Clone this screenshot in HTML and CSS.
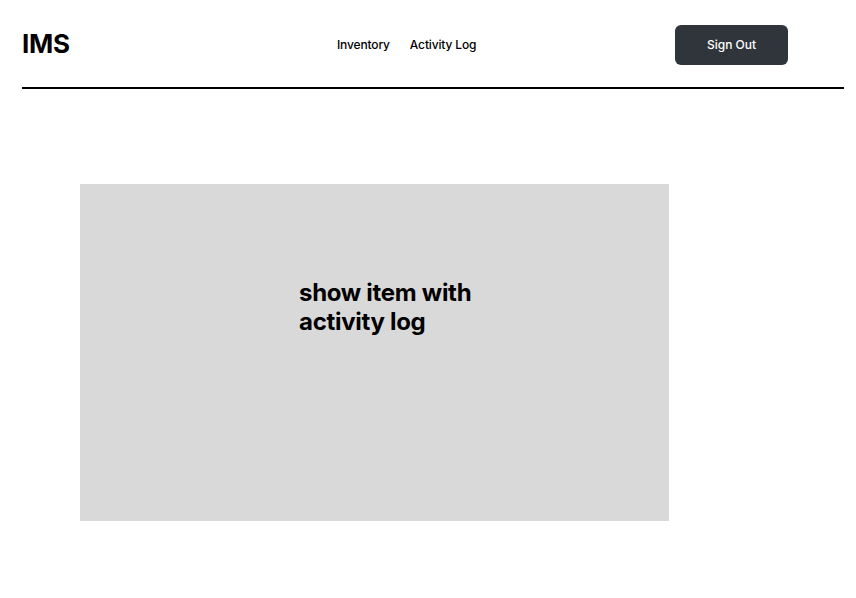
FILE: index.html
```html
<!DOCTYPE html>
<html lang="en">
<head>
<meta charset="utf-8">
<title>IMS</title>
<link rel="stylesheet" href="styles.css">
</head>
<body>
<header class="site-header">
  <div class="header-inner">
    <div class="logo">IMS</div>
    <nav class="nav">
      <a href="#" class="nav-link">Inventory</a>
      <a href="#" class="nav-link">Activity Log</a>
    </nav>
    <button class="sign-out">Sign Out</button>
  </div>
</header>
<main class="main">
  <section class="placeholder">
    <p class="placeholder-text">show item with activity log</p>
  </section>
</main>
</body>
</html>
```
FILE: styles.css
```css
* { box-sizing: border-box; }
html, body { margin: 0; padding: 0; background: #ffffff; }
body {
  font-family: Inter, "Noto Sans", sans-serif;
  color: #000000;
}
.site-header {
  margin: 0 12px 0 22px;
  border-bottom: 2px solid #000000;
}
.header-inner {
  height: 87px;
  display: grid;
  grid-template-columns: 315px auto 1fr;
  align-items: center;
  padding-right: 56px;
}
.logo {
  font-size: 26px;
  font-weight: 700;
  letter-spacing: -0.2px;
}
.nav {
  display: flex;
  gap: 20px;
  padding-top: 2px;
}
.nav-link {
  font-size: 12px;
  font-weight: 500;
  letter-spacing: -0.15px;
  color: #000000;
  text-decoration: none;
}
.sign-out {
  justify-self: end;
  width: 113px;
  height: 40px;
  background: #2f353b;
  color: #ffffff;
  border: none;
  border-radius: 6px;
  font-family: inherit;
  font-size: 12px;
  font-weight: 500;
  margin-top: 2px;
}
.main {
  padding: 95px 0 0 80px;
}
.placeholder {
  width: 589px;
  height: 337px;
  background: #d9d9d9;
  padding: 94px 0 0 219px;
}
.placeholder-text {
  margin: 0;
  width: 200px;
  font-size: 24px;
  font-weight: 700;
  letter-spacing: -0.3px;
  line-height: 29px;
}
```
